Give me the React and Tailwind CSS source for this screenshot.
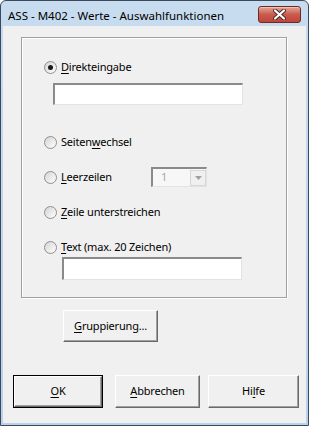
import React from 'react';

const font = { fontFamily: '"Noto Sans", "Liberation Sans", sans-serif' };

// underline the access key letter
const Key = ({ children }) => <span className="underline underline-offset-2">{children}</span>;

const Radio = ({ checked }) => (
  <span className="w-[13px] h-[13px] rounded-full border border-[#8f8f8f] bg-gradient-to-br from-[#d4d4d4] to-white flex items-center justify-center shrink-0">
    {checked && <span className="w-[5px] h-[5px] rounded-full bg-[#1a1a1a]"></span>}
  </span>
);

const TextBox = ({ className }) => (
  <div className={`border-t-2 border-l-2 border-t-[#8a8a8a] border-l-[#8a8a8a] border-b border-r border-b-[#e3e3e3] border-r-[#e3e3e3] bg-white ${className}`}></div>
);

const Button = ({ children, className, isDefault }) => (
  <div className={`${isDefault ? 'border border-black' : ''} ${className}`}>
    <div className="h-full w-full border border-t-white border-l-white border-b-[#696969] border-r-[#696969] shadow-[inset_-1px_-1px_0_#a0a0a0] bg-[#f0f0f0] flex items-center justify-center text-[11px] tracking-[-0.2px] text-black">
      {children}
    </div>
  </div>
);

export default function App() {
  return (
    <div className="w-[309px] h-[426px] bg-white" style={font}>
      <div className="w-[309px] h-[426px] rounded-t-[6px] border border-[#3a4a5c] bg-gradient-to-b from-[#c8dcf0] to-[#b9d1ea] flex flex-col px-[2px] pb-[2px]">
        {/* Title bar */}
        <div className="h-[25px] flex items-start justify-between pl-[5px] pr-[5px] shrink-0">
          <span className="text-[11.5px] leading-[16px] mt-[7px] text-black">ASS - M402 - Werte - Auswahlfunktionen</span>
          <div className="mt-[5px] w-[43px] h-[17px] rounded-[3px] border border-[#6b2a22] bg-gradient-to-b from-[#e3a59c] via-[#c95b4b] to-[#c0443a] shadow-[inset_0_1px_0_#f0c0b8] flex items-center justify-center">
            <svg width="13" height="11" viewBox="0 0 13 11">
              <path d="M2 1.5 L11 9.5 M11 1.5 L2 9.5" stroke="#4a2a28" strokeWidth="4" strokeLinecap="round" />
              <path d="M2 1.5 L11 9.5 M11 1.5 L2 9.5" stroke="white" strokeWidth="2.2" strokeLinecap="round" />
            </svg>
          </div>
        </div>

        {/* Client area */}
        <div className="flex-1 bg-[#f0f0f0] flex flex-col">
          {/* Group box */}
          <div className="ml-[18px] mt-[11px] w-[266px] h-[261px] border border-[#a0a0a0] shadow-[inset_1px_1px_0_white,1px_1px_0_white] flex flex-col pl-[22px] text-[11px] tracking-[-0.2px] text-black">
            <div className="mt-[21px] h-[16px] flex items-center gap-[4px]">
              <Radio checked />
              <span><Key>D</Key>irekteingabe</span>
            </div>
            <TextBox className="mt-[8px] ml-[9px] w-[190px] h-[22px]" />

            <div className="mt-[29px] h-[16px] flex items-center gap-[4px]">
              <Radio />
              <span>Seiten<Key>w</Key>echsel</span>
            </div>

            <div className="mt-[19px] h-[16px] flex items-center gap-[4px]">
              <Radio />
              <span className="w-[86px]"><Key>L</Key>eerzeilen</span>
              <div className="my-[-2px] w-[56px] h-[20px] border-t-2 border-l-2 border-t-[#8a8a8a] border-l-[#8a8a8a] border-b border-r border-b-[#e3e3e3] border-r-[#e3e3e3] bg-[#f7f7f7] flex items-center">
                <span className="flex-1 pl-[8px] text-[#a0a8b8]">1</span>
                <div className="w-[16px] h-[16px] border border-[#d8d8d8] bg-[#f0f0f0] flex items-center justify-center">
                  <svg width="7" height="4" viewBox="0 0 7 4"><path d="M0 0 H7 L3.5 4 Z" fill="#a0a0a0" /></svg>
                </div>
              </div>
            </div>

            <div className="mt-[19px] h-[16px] flex items-center gap-[4px]">
              <Radio />
              <span><Key>Z</Key>eile unterstreichen</span>
            </div>

            <div className="mt-[19px] h-[16px] flex items-center gap-[4px]">
              <Radio />
              <span><Key>T</Key>ext (max. 20 Zeichen)</span>
            </div>
            <TextBox className="mt-[2px] ml-[18px] w-[180px] h-[23px]" />
          </div>

          <Button className="ml-[60px] mt-[12px] w-[95px] h-[32px]"><span><Key>G</Key>ruppierung...</span></Button>

          <div className="mt-[33px] ml-[10px] flex">
            <Button isDefault className="w-[90px] h-[33px]"><span><Key>O</Key>K</span></Button>
            <Button className="ml-[12px] w-[85px] h-[33px]"><span><Key>A</Key>bbrechen</span></Button>
            <Button className="ml-[8px] w-[91px] h-[33px]"><span>Hi<Key>l</Key>fe</span></Button>
          </div>
        </div>
      </div>
    </div>
  );
}
